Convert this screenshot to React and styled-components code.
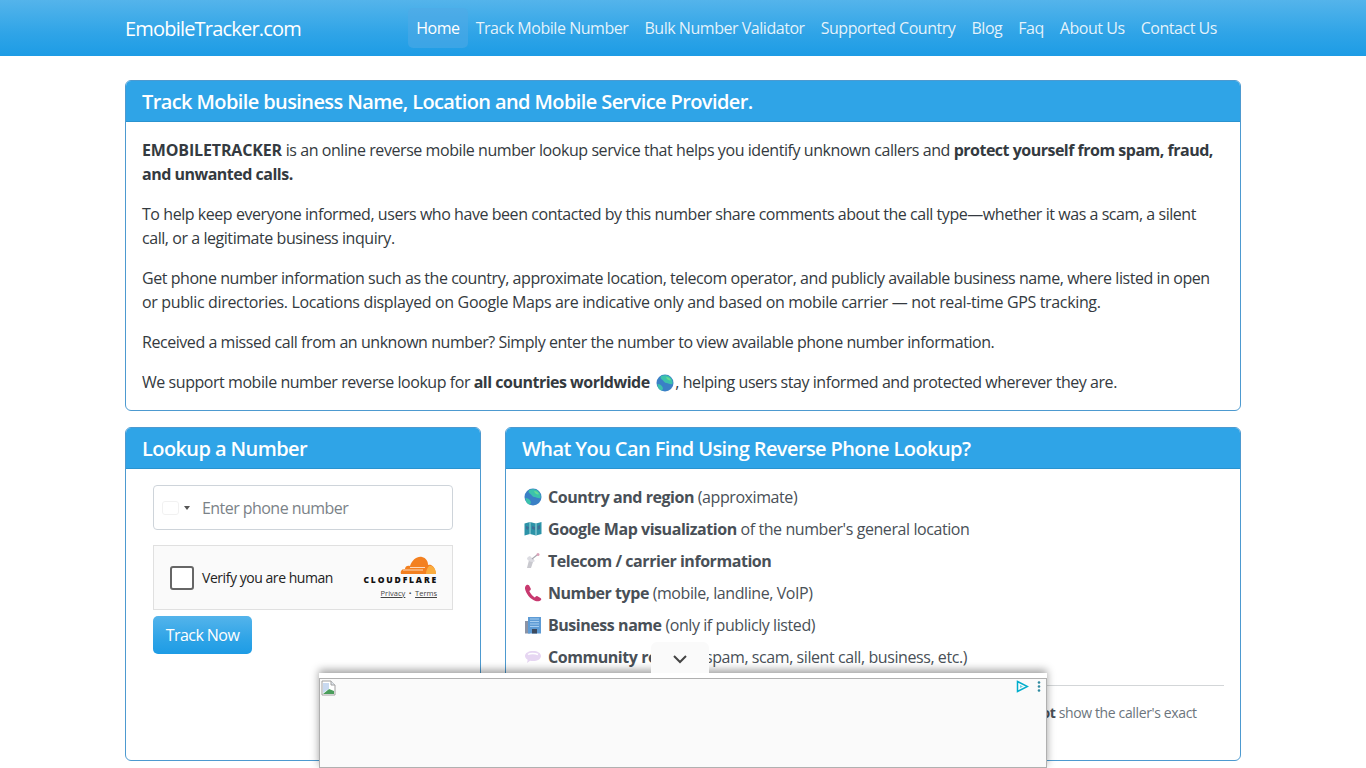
import React from "react";
import styled, { createGlobalStyle } from "styled-components";

const Global = createGlobalStyle`
  html, body { margin: 0; padding: 0; background: #fff; }
  body { font-family: "Open Sans", "Noto Sans", "Liberation Sans", sans-serif; font-size: 16px; line-height: 24px; color: #343a40; letter-spacing: -0.445px; }
  * { box-sizing: border-box; }
`;
const Bar = styled.nav`
  height: 56px;
  background: linear-gradient(#54b4eb, #2fa4e7 60%, #1d9ce5);
`;
const Wrap = styled.div`
  width: 1140px;
  margin: 0 auto;
  padding: 0 12px;
`;
const BarInner = styled(Wrap)`
  height: 100%;
  display: flex;
  align-items: center;
`;
const Brand = styled.a`
  color: #fff;
  font-size: 20px;
  line-height: 30px;
  letter-spacing: -0.8px;
  margin-top: 2px;
`;
const Menu = styled.div`
  margin-left: auto;
  padding-right: 16px;
  display: flex;
`;
const MenuLink = styled.a`
  color: rgba(255, 255, 255, ${(p) => (p.$active ? 1 : 0.88)});
  padding: 8px;
  height: 40px;
  border-radius: 5px;
  letter-spacing: -0.46px;
  background: ${(p) => (p.$active ? "rgba(80,170,230,.55)" : "transparent")};
  text-shadow: 0 1px 0 rgba(0, 0, 0, 0.05);
`;
const Main = styled(Wrap)`
  padding-top: 24px;
`;
const Card = styled.section`
  border: 1px solid #4d9ad0;
  border-radius: 6px;
  background: #fff;
  overflow: hidden;
`;
const CardHead = styled.h2`
  margin: 0;
  height: 41px;
  padding: 9px 16px 7px;
  background: #2fa4e7;
  border-bottom: 1px solid #2a93cf;
  color: #fff;
  font-size: 20px;
  font-weight: 600;
  line-height: 24px;
  letter-spacing: -0.6px;
`;
const CardBody = styled.div`
  padding: 16px;
`;
const Para = styled.p`
  margin: 0 0 16px;
  letter-spacing: ${(p) => p.$track || "inherit"};
  &:last-child { margin-bottom: 0; }
`;
const Loose = styled.span`
  letter-spacing: -0.35px;
`;
const Strong = styled.b`
  font-weight: 700;
  letter-spacing: -0.5px;
`;
const Lead = styled(Strong)`
  letter-spacing: -0.15px;
`;
const Row = styled.div`
  display: grid;
  grid-template-columns: 356px 736px;
  gap: 24px;
  margin-top: 16px;
`;
const FormBody = styled(CardBody)`
  padding: 16px 27px;
`;
const PhoneField = styled.div`
  height: 45px;
  border: 1px solid #ced4da;
  border-radius: 4px;
  display: flex;
  align-items: center;
  padding-left: 8px;
`;
const Flag = styled.span`
  width: 17px;
  height: 14px;
  border-radius: 3px;
  border: 1px solid #f1f1f1;
`;
const Caret = styled.span`
  width: 0;
  height: 0;
  margin: 0 12px 0 5px;
  border-left: 3px solid transparent;
  border-right: 3px solid transparent;
  border-top: 4px solid #555;
`;
const PhoneInput = styled.input`
  flex: 1;
  min-width: 0;
  padding: 0;
  border: 0;
  outline: 0;
  background: none;
  font: inherit;
  letter-spacing: -0.55px;
  color: #495057;
  &::placeholder { color: #7b8288; opacity: 1; }
`;
const Captcha = styled.div`
  height: 65px;
  margin: 15px 0 6px;
  background: #fafafa;
  border: 1px solid #e0e0e0;
  display: flex;
  align-items: center;
  padding: 0 15px 0 16px;
`;
const Tick = styled.span`
  width: 24px;
  height: 24px;
  border: 2px solid #666;
  border-radius: 3px;
  background: #fff;
`;
const CaptchaLabel = styled.span`
  margin-left: 8px;
  font-size: 14px;
  color: #232323;
  letter-spacing: -0.45px;
`;
const Brandmark = styled.div`
  margin-left: auto;
  display: flex;
  flex-direction: column;
  align-items: flex-end;
  margin-top: -3px;
`;
const CfWord = styled.span`
  font-size: 8.5px;
  line-height: 9px;
  font-weight: 800;
  letter-spacing: 1.85px;
  margin-right: -1px;
  color: #111;
`;
const CfLinks = styled.span`
  margin-top: 5px;
  font-size: 7.5px;
  line-height: 9px;
  letter-spacing: 0;
  word-spacing: 1.5px;
  color: #444;
`;
const CfLink = styled.a`
  text-decoration: underline;
`;
const Button = styled.button`
  display: block;
  height: 38px;
  width: 99px;
  padding: 0;
  border: 0;
  border-radius: 5px;
  background: linear-gradient(#54b4eb, #2fa4e7 60%, #1d9ce5);
  color: #fff;
  font: inherit;
  letter-spacing: -0.55px;
  text-shadow: 0 1px 0 rgba(0, 0, 0, 0.05);
`;
const List = styled.ul`
  list-style: none;
  margin: 0 0 16px;
  padding: 0;
`;
const Item = styled.li`
  display: flex;
  align-items: center;
  gap: 6px;
  height: 24px;
  margin-bottom: 8px;
  padding-left: 2px;
  color: #495057;
  white-space: pre;
  letter-spacing: -0.42px;
  &:last-child { margin-bottom: 0; }
  b { letter-spacing: -0.45px; }
`;
const Rule = styled.hr`
  margin: 0 0 16px;
  border: 0;
  border-top: 1px solid #d3d6d8;
`;
const Note = styled.p`
  margin: 0;
  font-size: 14px;
  line-height: 21px;
  color: #6c757d;
  letter-spacing: -0.37px;
`;
const NoteStrong = styled.b`
  color: #495057;
`;
const InlineEmoji = styled.span`
  display: inline-block;
  height: 18px;
  margin-left: 3px;
  margin-right: 1px;
  vertical-align: -4px;
`;
const Banner = styled.aside`
  position: fixed;
  left: 319px;
  bottom: 0;
  width: 728px;
  height: 95px;
  background: #fff;
  padding-top: 5px;
  box-shadow: 0 -3px 8px rgba(0, 0, 0, 0.38);
`;
const AdSlot = styled.div`
  position: relative;
  height: 90px;
  background: #fafafa;
  border: 1px solid #b0b0b0;
`;
const Toggle = styled.div`
  position: absolute;
  left: 332px;
  top: -31px;
  width: 58px;
  height: 31px;
  background: #fafafa;
  border-radius: 6px 6px 0 0;
  display: flex;
  align-items: center;
  justify-content: center;
  padding-top: 2px;
`;
const Broken = styled.svg`
  position: absolute;
  left: 1px;
  top: 1px;
`;
const AdMarks = styled.div`
  position: absolute;
  right: 5px;
  top: 1px;
  display: flex;
  gap: 8px;
  align-items: center;
`;

const Globe = () => (
  <svg width="18" height="18" viewBox="0 0 18 18">
    <circle cx="9" cy="9" r="8.500" fill="#3a80c6" />
    <path d="M5 2c3-1.500 7-1 9 1 2 2 3 4 2.500 7-2 1-4-1-6-1S8 7 6.500 6 4 4 5 2zM1.500 10c2 0 4 1 5 3s0 3-1 3.500C3 16 1.500 13 1.500 10z" fill="#3cc2ac" />
    <path d="M10 3c2 0 4 1 5 3-1 1-3 0-4-1z" fill="#66dc92" />
  </svg>
);
const MapIcon = () => (
  <svg width="18" height="18" viewBox="0 0 18 18">
    <path d="M.5 3.500l5.500-1.500 6 1.500 5.500-1.500V14l-5.500 1.500L6 14 .5 15.500z" fill="#2c93a8" />
    <path d="M6 2v12M12 3.500v12" stroke="#a8dbe0" strokeWidth="1" />
    <path d="M2 6l3 1-1 3-2-1zM8 6l3 1v3L8 9zM13.500 6l2.500-1v4l-2.500 1z" fill="#3d6f96" />
  </svg>
);
const Antenna = () => (
  <svg width="18" height="18" viewBox="0 0 18 18">
    <path d="M5 8l5-1-3 9H3z" fill="#c9c9cf" />
    <path d="M3 7c2 3 6 4 8 2L6 4C4 4.500 3 5.500 3 7z" fill="#dcdce2" />
    <path d="M8 7l5-4" stroke="#a9a9b2" strokeWidth="1.200" />
    <circle cx="14" cy="2.500" r="1.500" fill="#d9a2b8" />
  </svg>
);
const Phone = () => (
  <svg width="18" height="18" viewBox="0 0 18 18">
    <path d="M2.500 1C1 2 .5 4 1.500 6.500c1.500 4.500 5.500 9 10 10.500 2 .6 4.500.3 5.500-1 .5-.8.2-1.500-.5-2l-3-1.800c-.8-.4-1.400-.2-2 .5l-.7.8C8 11.500 6 9 5.300 7l1-.8c.6-.6.7-1.200.3-2L5 1.300C4.500.5 3.200.5 2.500 1z" fill="#c8396f" />
  </svg>
);
const Building = () => (
  <svg width="18" height="18" viewBox="0 0 18 18">
    <path d="M1 5h5v12.500H1z" fill="#8b93a5" />
    <path d="M4 1h13v16.500H4z" fill="#5d9bd5" />
    <path d="M6 3h9M6 5.500h9M6 8h9M6 10.500h9" stroke="#a5cdf0" strokeWidth="1.100" />
    <path d="M8 13h5v4.500H8z" fill="#3c4a5e" />
  </svg>
);
const Speech = () => (
  <svg width="18" height="18" viewBox="0 0 18 18">
    <path d="M9 3c4.500 0 8 2 8 5s-3.500 5-8 5c-1 0-2 0-2.800-.3L3 15l.7-3.300C2 10.800 1 9.500 1 8c0-3 3.500-5 8-5z" fill="#e6d6f2" />
    <path d="M4 6.500c2-1.500 7-1.500 10 0" stroke="#fff" strokeWidth="1.500" fill="none" />
  </svg>
);
const Cloud = () => (
  <svg width="38" height="20" viewBox="0 0 38 20">
    <path d="M2 19c-1-3 1-5 4-5 0-3 3-4 5-3 2-6 7-10 12-9 4 1 6 4 6 8 3-1 7 1 8 9z" fill="#f38020" />
    <path d="M27 19c0-3 1-6 3-8 3-1 7 2 7 8z" fill="#faad3f" />
    <path d="M4 15h20M11 12.500h15" stroke="#fff" strokeWidth=".7" />
  </svg>
);

export default function App() {
  return (
    <>
      <Global />
      <Bar>
        <BarInner>
          <Brand>EmobileTracker.com</Brand>
          <Menu>
            <MenuLink $active>Home</MenuLink>
            <MenuLink>Track Mobile Number</MenuLink>
            <MenuLink>Bulk Number Validator</MenuLink>
            <MenuLink>Supported Country</MenuLink>
            <MenuLink>Blog</MenuLink>
            <MenuLink>Faq</MenuLink>
            <MenuLink>About Us</MenuLink>
            <MenuLink>Contact Us</MenuLink>
          </Menu>
        </BarInner>
      </Bar>
      <Main>
        <Card>
          <CardHead>Track Mobile business Name, Location and Mobile Service Provider.</CardHead>
          <CardBody>
            <Para $track="-0.43px">
              <Lead>EMOBILETRACKER</Lead> is an online reverse mobile number lookup service that helps you identify unknown callers and <Strong>protect yourself from spam, fraud, and unwanted calls.</Strong>
            </Para>
            <Para>
              To help keep everyone informed, users who have been contacted by this number share comments about the call type—whether it was a scam, a silent call, or a legitimate business inquiry.
            </Para>
            <Para>
              Get phone number information such as the country, approximate location, telecom operator, and publicly available business name, where listed in open <Loose>or public directories. Locations displayed on Google Maps are indicative only and based on mobile carrier — not real-time GPS tracking.</Loose>
            </Para>
            <Para>Received a missed call from an unknown number? Simply enter the number to view available phone number information.</Para>
            <Para>
              We support mobile number reverse lookup for <Strong>all countries worldwide</Strong>{" "}
              <InlineEmoji><Globe /></InlineEmoji>, helping users stay informed and protected wherever they are.
            </Para>
          </CardBody>
        </Card>
        <Row>
          <Card>
            <CardHead>Lookup a Number</CardHead>
            <FormBody>
              <PhoneField>
                <Flag />
                <Caret />
                <PhoneInput placeholder="Enter phone number" />
              </PhoneField>
              <Captcha>
                <Tick />
                <CaptchaLabel>Verify you are human</CaptchaLabel>
                <Brandmark>
                  <Cloud />
                  <CfWord>CLOUDFLARE</CfWord>
                  <CfLinks>
                    <CfLink>Privacy</CfLink> • <CfLink>Terms</CfLink>
                  </CfLinks>
                </Brandmark>
              </Captcha>
              <Button>Track Now</Button>
            </FormBody>
          </Card>
          <Card>
            <CardHead>What You Can Find Using Reverse Phone Lookup?</CardHead>
            <CardBody>
              <List>
                <Item><Globe /><span><Strong>Country and region</Strong> (approximate)</span></Item>
                <Item><MapIcon /><span><Strong>Google Map visualization</Strong> of the number's general location</span></Item>
                <Item><Antenna /><span><Strong>Telecom / carrier information</Strong></span></Item>
                <Item><Phone /><span><Strong>Number type</Strong> (mobile, landline, VoIP)</span></Item>
                <Item><Building /><span><Strong>Business name</Strong> (only if publicly listed)</span></Item>
                <Item><Speech /><span><Strong>Community reports</Strong> (spam, scam, silent call, business, etc.)</span></Item>
              </List>
              <Rule />
              <Note>
                Important: A reverse lookup provides approximate information only, and this does <NoteStrong>not</NoteStrong> show the caller's exact
                <br />
                real-time location.
              </Note>
            </CardBody>
          </Card>
        </Row>
      </Main>
      <Banner>
        <Toggle>
          <svg width="16" height="10" viewBox="0 0 16 10">
            <path d="M2 2l6 6 6-6" fill="none" stroke="#444" strokeWidth="2" />
          </svg>
        </Toggle>
        <AdSlot>
          <Broken width="16" height="16" viewBox="0 0 16 16">
            <path d="M1 1h9l4 4v10H1z" fill="#fff" stroke="#a0a0a0" />
            <path d="M10 1v4h4" fill="#dfe6ee" stroke="#a0a0a0" />
            <path d="M2 14l6-5 5 2v3z" fill="#4a9d5b" />
            <path d="M2 3h6v6l-6 4z" fill="#c8d9f0" />
          </Broken>
          <AdMarks>
            <svg width="13" height="13" viewBox="0 0 13 13">
              <path d="M1.500 1.500l10 5-10 5z" fill="none" stroke="#00aecd" strokeWidth="1.500" />
              <path d="M4 5l3 1.500-3 1.500z" fill="#6fd0e3" />
            </svg>
            <svg width="4" height="13" viewBox="0 0 4 13">
              <circle cx="2" cy="2.500" r="1.300" fill="#2f8aa0" />
              <circle cx="2" cy="6.500" r="1.300" fill="#2f8aa0" />
              <circle cx="2" cy="10.500" r="1.300" fill="#2f8aa0" />
            </svg>
          </AdMarks>
        </AdSlot>
      </Banner>
    </>
  );
}
